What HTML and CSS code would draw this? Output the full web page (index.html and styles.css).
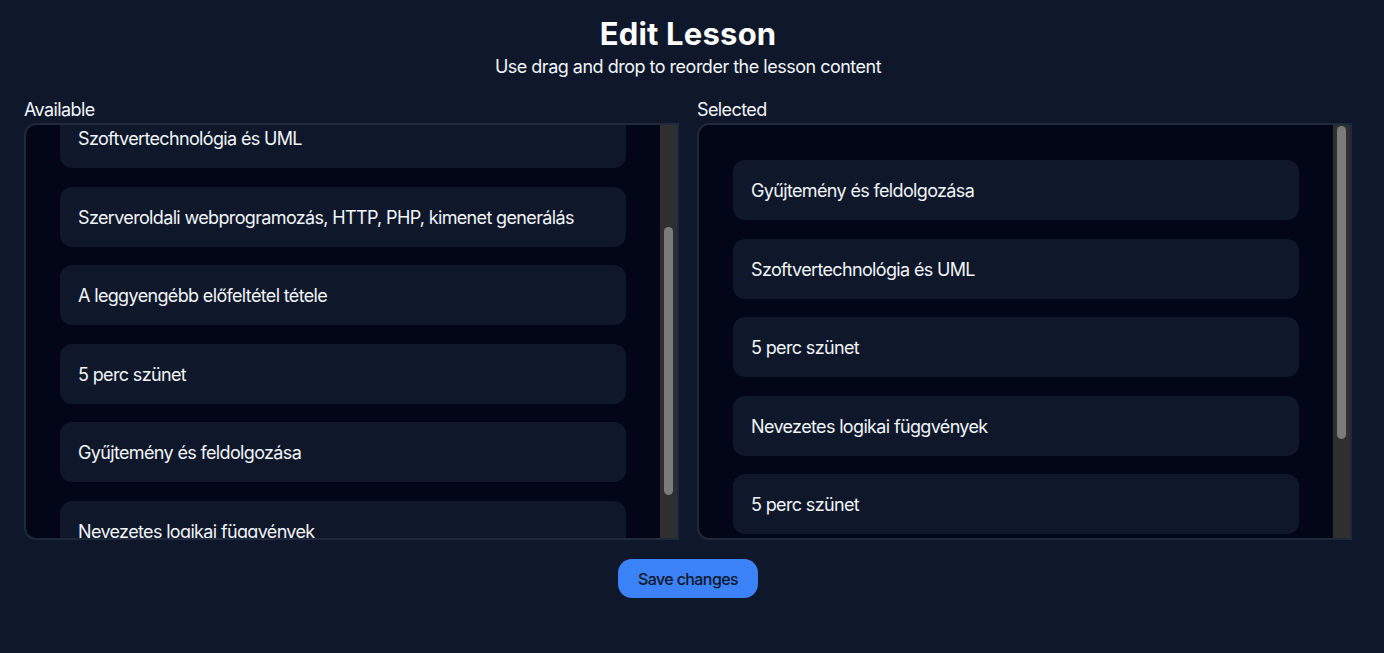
FILE: index.html
```html
<!DOCTYPE html>
<html lang="hu">
<head>
<meta charset="utf-8">
<title>Edit Lesson</title>
<link rel="stylesheet" href="styles.css">
</head>
<body>
<main class="page">
  <header class="intro">
    <h1 class="intro-title">Edit Lesson</h1>
    <p class="intro-text">Use drag and drop to reorder the lesson content</p>
  </header>
  <div class="columns">
    <section class="column">
      <h2 class="column-label">Available</h2>
      <div class="panel">
        <ul class="lesson-list" id="available">
          <li class="lesson-item">Szoftvertechnológia és UML</li>
          <li class="lesson-item">Szerveroldali webprogramozás, HTTP, PHP, kimenet generálás</li>
          <li class="lesson-item">A leggyengébb előfeltétel tétele</li>
          <li class="lesson-item">5 perc szünet</li>
          <li class="lesson-item">Gyűjtemény és feldolgozása</li>
          <li class="lesson-item">Nevezetes logikai függvények</li>
        </ul>
        <div class="scrollbar"><span class="scrollbar-thumb" style="margin-top:102px;height:268px"></span></div>
      </div>
    </section>
    <section class="column">
      <h2 class="column-label">Selected</h2>
      <div class="panel">
        <ul class="lesson-list" id="selected">
          <li class="lesson-item">Gyűjtemény és feldolgozása</li>
          <li class="lesson-item">Szoftvertechnológia és UML</li>
          <li class="lesson-item">5 perc szünet</li>
          <li class="lesson-item">Nevezetes logikai függvények</li>
          <li class="lesson-item">5 perc szünet</li>
        </ul>
        <div class="scrollbar"><span class="scrollbar-thumb" style="margin-top:1px;height:313px"></span></div>
      </div>
    </section>
  </div>
  <div class="actions">
    <button class="save-button" type="button">Save changes</button>
  </div>
</main>
<script src="script.js"></script>
</body>
</html>
```
FILE: styles.css
```css
* { box-sizing: border-box; }

html, body {
  margin: 0;
  background: #0f172a;
  color: #f1f5f9;
  font-family: Inter, "Noto Sans", "Liberation Sans", sans-serif;
}

.page {
  padding: 16px 32px 0 24px;
}

.intro {
  text-align: center;
}

.intro-title {
  margin: 0;
  font-size: 31px;
  line-height: 36px;
  font-weight: 700;
  letter-spacing: 0.2px;
  color: #ffffff;
}

.intro-text {
  margin: 3px 0 0;
  font-size: 18px;
  line-height: 24px;
  letter-spacing: -0.5px;
  color: #f1f5f9;
}

.columns {
  display: grid;
  grid-template-columns: 1fr 1fr;
  gap: 18px;
  margin-top: 18px;
}

.column-label {
  margin: 0 0 1px;
  padding-top: 1px;
  font-size: 18px;
  line-height: 24px;
  font-weight: 400;
  letter-spacing: -0.6px;
  color: #f1f5f9;
}

.panel {
  display: flex;
  height: 417px;
  background: #020617;
  border: 2px solid #1e293b;
  border-radius: 12px 0 0 12px;
}

.lesson-list {
  flex: 1;
  list-style: none;
  margin: 0;
  padding: 35px 34px;
  overflow: hidden;
  display: flex;
  flex-direction: column;
  gap: 18.5px;
}

.lesson-item {
  flex: none;
  padding: 19px 18px 17px;
  line-height: 24px;
  font-size: 18px;
  letter-spacing: -0.65px;
  background: #0f172a;
  border-radius: 12px;
  color: #f1f5f9;
}

.scrollbar {
  flex: none;
  width: 17px;
  padding: 0 4px;
  background: #2f2f2f;
  display: flex;
  flex-direction: column;
}

.scrollbar-thumb {
  display: block;
  width: 9px;
  background: #7b7b7b;
  border-radius: 5px;
}

.actions {
  display: flex;
  justify-content: center;
  margin-top: 19px;
}

.save-button {
  font-family: inherit;
  font-size: 16px;
  font-weight: 500;
  line-height: 23px;
  letter-spacing: -0.6px;
  padding: 9px 20px 7px;
  border: none;
  border-radius: 14px;
  background: #3b82f6;
  color: #0f172a;
}
```
FILE: script.js
```js
document.getElementById('available').scrollTop = 52;
```
